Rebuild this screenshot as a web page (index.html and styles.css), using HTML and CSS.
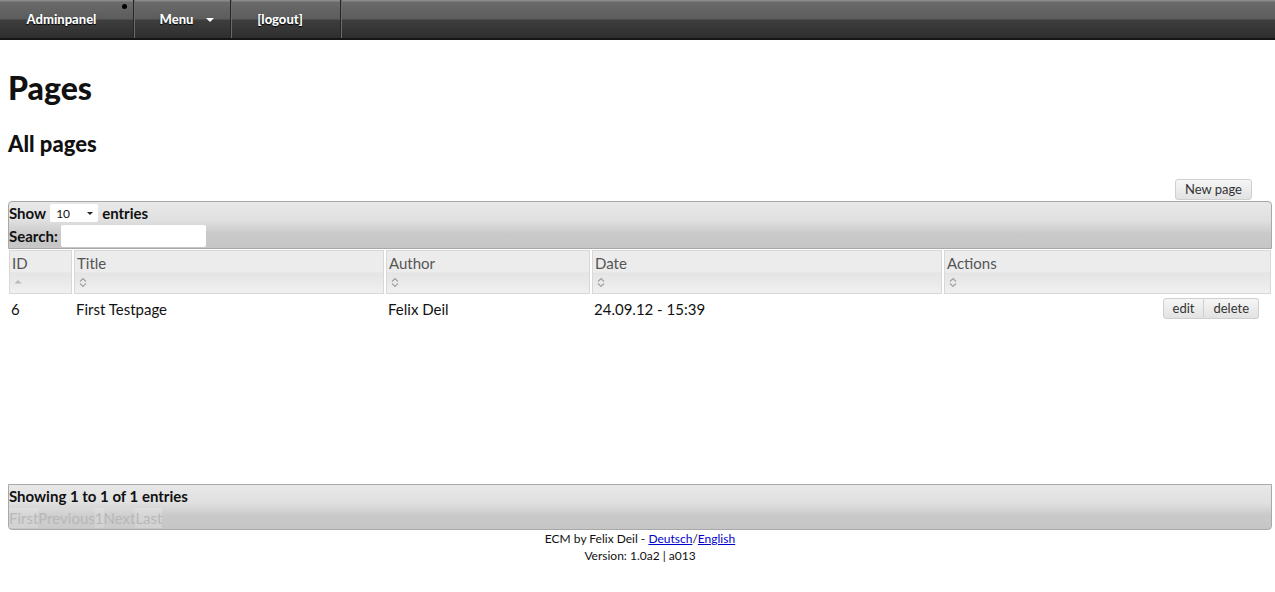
FILE: index.html
```html
<!DOCTYPE html>
<html>
<head>
<meta charset="utf-8">
<title>Pages</title>
<link rel="stylesheet" href="styles.css">
</head>
<body>
<nav class="topbar">
  <ul class="nav">
    <li class="nav-item nav-admin"><a href="#">Adminpanel</a><span class="dot"></span></li>
    <li class="nav-item nav-menu"><a href="#">Menu <span class="caret"></span></a></li>
    <li class="nav-item nav-logout"><a href="#">[logout]</a></li>
  </ul>
</nav>

<main class="content">
  <h1 class="title">Pages</h1>
  <h2 class="subtitle">All pages</h2>

  <div class="actions-top">
    <button class="btn">New page</button>
  </div>

  <div class="dt-wrapper">
    <div class="dt-toolbar">
      <div class="dt-length">Show <span class="select">10<span class="sel-caret"></span></span> entries</div>
      <div class="dt-filter">Search: <span class="search"></span></div>
    </div>

    <div class="dt-body">
      <table class="dt">
        <thead>
          <tr>
            <th class="c-id"><div class="th-label">ID</div><div class="th-sort"><svg width="10" height="10" viewBox="0 0 10 10"><path d="M1.5 6.5 L5 3 L8.5 6.5 Z" fill="#b8b8b8"/></svg></div></th>
            <th class="c-title"><div class="th-label">Title</div><div class="th-sort"><svg width="10" height="11" viewBox="0 0 10 11"><path d="M2 4.5 L5 1.5 L8 4.5 M2 6.5 L5 9.5 L8 6.5" fill="none" stroke="#a0a0a0" stroke-width="1.1"/></svg></div></th>
            <th class="c-author"><div class="th-label">Author</div><div class="th-sort"><svg width="10" height="11" viewBox="0 0 10 11"><path d="M2 4.5 L5 1.5 L8 4.5 M2 6.5 L5 9.5 L8 6.5" fill="none" stroke="#a0a0a0" stroke-width="1.1"/></svg></div></th>
            <th class="c-date"><div class="th-label">Date</div><div class="th-sort"><svg width="10" height="11" viewBox="0 0 10 11"><path d="M2 4.5 L5 1.5 L8 4.5 M2 6.5 L5 9.5 L8 6.5" fill="none" stroke="#a0a0a0" stroke-width="1.1"/></svg></div></th>
            <th class="c-actions"><div class="th-label">Actions</div><div class="th-sort"><svg width="10" height="11" viewBox="0 0 10 11"><path d="M2 4.5 L5 1.5 L8 4.5 M2 6.5 L5 9.5 L8 6.5" fill="none" stroke="#a0a0a0" stroke-width="1.1"/></svg></div></th>
          </tr>
        </thead>
        <tbody>
          <tr>
            <td>6</td>
            <td>First Testpage</td>
            <td>Felix Deil</td>
            <td>24.09.12 - 15:39</td>
            <td class="td-actions"><span class="btn-group"><button class="btn">edit</button><button class="btn">delete</button></span></td>
          </tr>
        </tbody>
      </table>
    </div>

    <div class="dt-footer">
      <div class="dt-info">Showing 1 to 1 of 1 entries</div>
      <div class="dt-paginate"><span class="pg">First</span><span class="pg pg-alt">Previous</span><span class="pg">1</span><span class="pg pg-alt">Next</span><span class="pg">Last</span></div>
    </div>
  </div>

  <footer class="footer">
    <div>ECM by Felix Deil - <a href="#">Deutsch</a>/<a href="#">English</a></div>
    <div>Version: 1.0a2 | a013</div>
  </footer>
</main>
</body>
</html>
```

FILE: styles.css
```css
* { box-sizing: border-box; }

body {
  margin: 0;
  font-family: Lato, "Open Sans", sans-serif;
  color: #111;
  background: #fff;
}

.topbar {
  height: 40px;
  background: linear-gradient(to bottom, #8a8a8a 0, #8a8a8a 1px, #6a6a6a 2px, #5c5c5c 19px, #3e3e3e 20px, #2e2e2e 38px);
  border-bottom: 2px solid #151515;
}

.nav {
  list-style: none;
  margin: 0;
  padding: 0;
  display: flex;
  height: 38px;
}

.nav-item {
  position: relative;
  display: flex;
  align-items: center;
  justify-content: center;
  border-right: 1px solid #262626;
  box-shadow: 1px 0 0 #6a6a6a;
}

.nav-item a {
  color: #fff;
  text-decoration: none;
  font-weight: 900;
  font-size: 13px;
  text-shadow: 0 1px 1px #000;
  display: flex;
  align-items: center;
}

.nav-admin { width: 134px; padding-right: 10px; }
.nav-menu { width: 97px; padding-left: 10px; }
.nav-logout { width: 110px; padding-right: 11px; }

.dot {
  position: absolute;
  left: 122px;
  top: 4px;
  width: 5px;
  height: 5px;
  border-radius: 50%;
  background: #000;
}

.caret {
  display: inline-block;
  margin-left: 13px;
  margin-top: 2px;
  width: 0;
  height: 0;
  border-left: 4px solid transparent;
  border-right: 4px solid transparent;
  border-top: 4px solid #fff;
}

.content {
  padding: 0 3px 0 8px;
}

.title {
  font-size: 32px;
  font-weight: 900;
  margin: 28px 0 0;
  line-height: 40px;
}

.subtitle {
  font-size: 22px;
  font-weight: 900;
  margin: 21px 0 0;
  line-height: 30px;
}

.actions-top {
  display: flex;
  justify-content: flex-end;
  padding-right: 20px;
  margin-top: 20px;
  height: 22px;
}

.btn {
  font-family: Lato, "Open Sans", sans-serif;
  font-size: 13px;
  color: #333;
  height: 21px;
  padding: 0 9px;
  border: 1px solid #cfcfcf;
  border-radius: 3px;
  background: linear-gradient(to bottom, #f6f6f6, #e2e2e2);
  line-height: 19px;
}

.dt-toolbar {
  height: 48px;
  border: 1px solid #a8a8a8;
  border-radius: 4px 4px 0 0;
  background: linear-gradient(to bottom, #e8e8e8 0, #e0e0e0 40%, #c9c9c9 70%, #c6c6c6 100%);
  font-weight: bold;
  font-size: 15px;
  padding: 1px 0 0 0;
}

.dt-length {
  display: flex;
  align-items: center;
  height: 20px;
  gap: 4px;
}

.select {
  display: inline-flex;
  align-items: center;
  width: 48px;
  height: 18px;
  background: #fff;
  font-weight: normal;
  font-size: 12px;
  padding-left: 6px;
  border-radius: 2px;
  position: relative;
}

.sel-caret {
  position: absolute;
  right: 5px;
  top: 8px;
  border-left: 3px solid transparent;
  border-right: 3px solid transparent;
  border-top: 3px solid #222;
}

.dt-filter {
  display: flex;
  align-items: center;
  height: 24px;
  margin-top: 1px;
  gap: 3px;
}

.search {
  display: inline-block;
  width: 145px;
  height: 22px;
  background: #fff;
  border-radius: 2px;
}

.dt-body {
  min-height: 235px;
}

.dt {
  width: calc(100% + 2px);
  margin-left: -1px;
  border-collapse: separate;
  border-spacing: 2px 1px;
  font-size: 15px;
}

.dt th {
  text-align: left;
  font-weight: normal;
  color: #555;
  border: 1px solid #d8d8d8;
  background: linear-gradient(to bottom, #ececec 0, #ececec 50%, #e4e4e4 52%, #f0f0f0 100%);
  padding: 2px 2px 2px 2px;
  height: 44px;
  vertical-align: top;
}

.th-label { line-height: 20px; }
.th-sort { height: 18px; display: flex; align-items: center; padding-left: 1px; }

.c-id { width: 63px; }
.c-title { width: 310px; }
.c-author { width: 204px; }
.c-date { width: 350px; }

.dt td {
  padding: 3px 2px 0;
  color: #111;
  vertical-align: middle;
}

.td-actions { text-align: right; padding-right: 12px !important; }

.btn-group { display: inline-flex; }
.btn-group .btn { margin: 0; }
.btn-group .btn:first-child { border-radius: 3px 0 0 3px; }
.btn-group .btn:last-child { border-radius: 0 3px 3px 0; border-left: none; }

.dt-footer {
  height: 46px;
  border: 1px solid #a8a8a8;
  border-radius: 0 0 4px 4px;
  background: linear-gradient(to bottom, #e8e8e8 0, #e0e0e0 40%, #c9c9c9 70%, #c6c6c6 100%);
  font-size: 15px;
  padding-top: 1px;
}

.dt-info { font-weight: bold; line-height: 20px; }

.dt-paginate {
  display: flex;
  margin-top: 2px;
  line-height: 20px;
}

.pg {
  color: #b8b8b8;
  background: rgba(255,255,255,0.22);
}

.pg-alt { background: rgba(255,255,255,0.1); }

.footer {
  text-align: center;
  font-size: 12px;
  line-height: 17px;
  color: #111;
}

.footer a { color: #00c; }
```
